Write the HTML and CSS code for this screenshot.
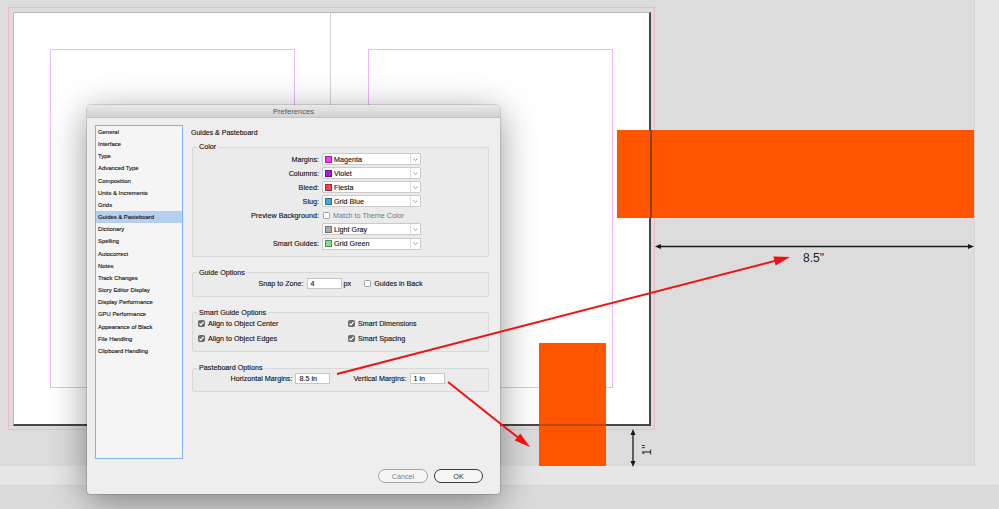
FILE: index.html
```html
<!DOCTYPE html>
<html lang="en">
<head>
  <meta charset="UTF-8">
  <title>Preferences - Guides &amp; Pasteboard</title>
  <link rel="stylesheet" href="styles.css">
</head>
<body>
  <div class="workspace">
    <div class="top">
      <div class="canvas">
        <div class="bleed">
          <div class="page">
            <div class="half half-left"><div class="margins"></div></div>
            <div class="half half-right"><div class="margins"></div></div>
          </div>
        </div>
        <div class="block block-wide"></div>
        <div class="block block-tall"></div>
        <span class="dim dim-h">8.5"</span>
        <span class="dim dim-v">1"</span>
      </div>
      <div class="vscroll"></div>
    </div>
    <div class="hscroll"></div>
    <div class="status"></div>
  </div>

  <div class="dialog">
    <div class="dialog-title">Preferences</div>
    <div class="dialog-main">
      <ul class="pref-list">
        <li>General</li>
        <li>Interface</li>
        <li>Type</li>
        <li>Advanced Type</li>
        <li>Composition</li>
        <li>Units &amp; Increments</li>
        <li>Grids</li>
        <li class="selected">Guides &amp; Pasteboard</li>
        <li>Dictionary</li>
        <li>Spelling</li>
        <li>Autocorrect</li>
        <li>Notes</li>
        <li>Track Changes</li>
        <li>Story Editor Display</li>
        <li>Display Performance</li>
        <li>GPU Performance</li>
        <li>Appearance of Black</li>
        <li>File Handling</li>
        <li>Clipboard Handling</li>
      </ul>

      <div class="panel">
        <h2 class="panel-title">Guides &amp; Pasteboard</h2>

        <fieldset class="group group-color">
          <legend>Color</legend>
          <div class="color-grid">
            <label>Margins:</label>
            <div class="select"><span class="swatch" style="background:#ff33ff"></span><span class="select-text">Magenta</span><span class="chev"><svg width="5" height="3" viewBox="0 0 5 3"><polyline points="0.5,0.5 2.5,2.5 4.5,0.5" /></svg></span></div>
            <label>Columns:</label>
            <div class="select"><span class="swatch" style="background:#a21cf2"></span><span class="select-text">Violet</span><span class="chev"><svg width="5" height="3" viewBox="0 0 5 3"><polyline points="0.5,0.5 2.5,2.5 4.5,0.5" /></svg></span></div>
            <label>Bleed:</label>
            <div class="select"><span class="swatch" style="background:#f2425a"></span><span class="select-text">Fiesta</span><span class="chev"><svg width="5" height="3" viewBox="0 0 5 3"><polyline points="0.5,0.5 2.5,2.5 4.5,0.5" /></svg></span></div>
            <label>Slug:</label>
            <div class="select"><span class="swatch" style="background:#4aa8d8"></span><span class="select-text">Grid Blue</span><span class="chev"><svg width="5" height="3" viewBox="0 0 5 3"><polyline points="0.5,0.5 2.5,2.5 4.5,0.5" /></svg></span></div>
            <label>Preview Background:</label>
            <div class="check-row"><span class="checkbox"></span><span class="muted">Match to Theme Color</span></div>
            <span></span>
            <div class="select"><span class="swatch" style="background:#a9a9a9"></span><span class="select-text">Light Gray</span><span class="chev"><svg width="5" height="3" viewBox="0 0 5 3"><polyline points="0.5,0.5 2.5,2.5 4.5,0.5" /></svg></span></div>
            <label>Smart Guides:</label>
            <div class="select"><span class="swatch" style="background:#7ee08a"></span><span class="select-text">Grid Green</span><span class="chev"><svg width="5" height="3" viewBox="0 0 5 3"><polyline points="0.5,0.5 2.5,2.5 4.5,0.5" /></svg></span></div>
          </div>
        </fieldset>

        <fieldset class="group">
          <legend>Guide Options</legend>
          <div class="inline-row">
            <label>Snap to Zone:</label>
            <span class="field field-snap">4</span>
            <span class="unit">px</span>
            <span class="checkbox"></span>
            <span>Guides in Back</span>
          </div>
        </fieldset>

        <fieldset class="group">
          <legend>Smart Guide Options</legend>
          <div class="smart-grid">
            <div class="check-row"><span class="checkbox checked"><svg width="7" height="7" viewBox="0 0 7 7"><polyline points="1.5,3.6 2.9,5 5.6,1.8" /></svg></span><span>Align to Object Center</span></div>
            <div class="check-row"><span class="checkbox checked"><svg width="7" height="7" viewBox="0 0 7 7"><polyline points="1.5,3.6 2.9,5 5.6,1.8" /></svg></span><span>Smart Dimensions</span></div>
            <div class="check-row"><span class="checkbox checked"><svg width="7" height="7" viewBox="0 0 7 7"><polyline points="1.5,3.6 2.9,5 5.6,1.8" /></svg></span><span>Align to Object Edges</span></div>
            <div class="check-row"><span class="checkbox checked"><svg width="7" height="7" viewBox="0 0 7 7"><polyline points="1.5,3.6 2.9,5 5.6,1.8" /></svg></span><span>Smart Spacing</span></div>
          </div>
        </fieldset>

        <fieldset class="group">
          <legend>Pasteboard Options</legend>
          <div class="inline-row paste-row">
            <label>Horizontal Margins:</label>
            <span class="field field-margin">8.5 in</span>
            <label class="second">Vertical Margins:</label>
            <span class="field field-margin">1 in</span>
          </div>
        </fieldset>
      </div>
    </div>
    <div class="dialog-buttons">
      <button class="btn btn-cancel">Cancel</button>
      <button class="btn btn-ok">OK</button>
    </div>
  </div>

  <svg class="annotations" width="999" height="509" viewBox="0 0 999 509">
    <!-- page edges showing through the orange blocks -->
    <line x1="651" y1="130" x2="651" y2="218" stroke="rgba(50,40,30,0.55)" stroke-width="2" />
    <line x1="539" y1="425" x2="606" y2="425" stroke="rgba(50,40,30,0.45)" stroke-width="1.5" />

    <!-- dimension arrows -->
    <line x1="659" y1="246.5" x2="970" y2="246.5" stroke="#1a1a1a" stroke-width="1.3" />
    <polygon points="655,246.5 661,244 661,249" fill="#1a1a1a" />
    <polygon points="974,246.5 968,244 968,249" fill="#1a1a1a" />
    <line x1="633" y1="433" x2="633" y2="463" stroke="#1a1a1a" stroke-width="1.3" />
    <polygon points="633,429 630.5,435 635.5,435" fill="#1a1a1a" />
    <polygon points="633,467 630.5,461 635.5,461" fill="#1a1a1a" />

    <!-- red callouts -->
    <line x1="337" y1="374" x2="776" y2="260.6" stroke="#f21010" stroke-width="2" />
    <polygon points="790,257 775.6,265.4 773.4,256.6" fill="#f21010" />
    <line x1="448" y1="382" x2="519" y2="438.3" stroke="#f21010" stroke-width="2" />
    <polygon points="530,447 514.7,440.6 520.3,433.6" fill="#f21010" />
  </svg>
</body>
</html>
```

FILE: styles.css
```css
/* Workspace */
html, body {
  margin: 0;
  padding: 0;
}

body {
  width: 999px;
  height: 509px;
  overflow: hidden;
  position: relative;
  background-color: #e6e6e6;
  font-family: "Liberation Sans", Arial, sans-serif;
}

.workspace {
  display: flex;
  flex-direction: column;
  height: 509px;
}

.top {
  display: flex;
  height: 466px;
}

.canvas {
  position: relative;
  width: 974px;
  background-color: #dcdcdc;
  border-right: 1px solid #d4d4d4;
}

.vscroll {
  flex: 1;
  background-color: #e6e6e6;
}

.hscroll {
  height: 19px;
  background-color: #e6e6e6;
  border-bottom: 1px solid #d3d3d3;
}

.status {
  flex: 1;
  background-color: #dbdbdb;
}

/* Document spread */
.bleed {
  position: absolute;
  left: 8px;
  top: 7px;
  padding: 4px 3px 3px 4px;
  border: 1px solid #efb9c2;
}

.page {
  display: flex;
  background: #fff;
  border-top: 1px solid #b9b9b9;
  border-left: 1px solid #b9b9b9;
  border-right: 2px solid #474747;
  border-bottom: 2px solid #474747;
}

.half {
  width: 318px;
  height: 411px;
  box-sizing: border-box;
  padding-top: 36px;
}

.half-left {
  width: 317px;
  padding-left: 36px;
  border-right: 1px solid #d2d2d2;
}

.half-right {
  padding-left: 37px;
}

.margins {
  width: 245px;
  height: 339px;
  box-sizing: border-box;
  border: 1px solid #ecb8f6;
}

.block {
  position: absolute;
  background-color: #ff5500;
}

.block-wide {
  left: 617px;
  top: 130px;
  width: 357px;
  height: 88px;
}

.block-tall {
  left: 539px;
  top: 343px;
  width: 67px;
  height: 123px;
}

.dim {
  position: absolute;
  font-size: 12px;
  color: #1c1c1c;
  line-height: 14px;
}

.dim-h {
  left: 803px;
  top: 251px;
}

.dim-v {
  left: 642px;
  top: 443px;
  transform: rotate(-90deg);
}

.annotations {
  position: absolute;
  left: 0;
  top: 0;
  pointer-events: none;
}

/* Dialog */
.dialog {
  position: absolute;
  left: 87px;
  top: 105px;
  width: 413px;
  height: 389px;
  box-sizing: border-box;
  background: #eeeeee;
  border-radius: 4px;
  box-shadow: 0 0 0 1px rgba(0, 0, 0, 0.12), 0 8px 36px rgba(0, 0, 0, 0.42);
  display: flex;
  flex-direction: column;
  font-size: 7.2px;
  color: #111;
  -webkit-text-stroke: 0.12px #111;
}

.dialog-title {
  height: 13px;
  line-height: 13px;
  text-align: center;
  color: #555;
  -webkit-text-stroke: 0;
  font-size: 7.6px;
  background: linear-gradient(#e8e8e8, #d2d2d2);
  border-bottom: 1px solid #c4c4c4;
  border-radius: 4px 4px 0 0;
  box-sizing: border-box;
}

.dialog-main {
  display: flex;
  gap: 8px;
  padding: 7px 11px 0 8px;
}

.pref-list {
  list-style: none;
  margin: 0;
  padding: 0;
  width: 88px;
  height: 334px;
  box-sizing: border-box;
  background: #f5f5f5;
  border: 1px solid #7fb2ee;
  font-size: 5.9px;
  color: #111;
}

.pref-list li {
  height: 12.17px;
  line-height: 12.17px;
  padding-left: 2px;
  white-space: nowrap;
}

.pref-list li.selected {
  background: #b5cfee;
}

.panel {
  flex: 1;
  display: flex;
  flex-direction: column;
}

.panel-title {
  margin: 3px 0 0;
  font-size: 7px;
  font-weight: normal;
  line-height: 10px;
}

/* Group boxes */
.group {
  margin: 11px 0 0 1px;
  padding: 0 0 7px;
  border: 1px solid #d9d9d9;
  border-radius: 2px;
  background: rgba(0, 0, 0, 0.012);
  min-width: 0;
}

.group-color {
  margin-top: 4px;
  padding-bottom: 6px;
}

.group legend {
  margin-left: 4px;
  padding: 0 2px;
  line-height: 10px;
  font-size: 7.2px;
}

.color-grid {
  display: grid;
  grid-template-columns: 126px 99px;
  column-gap: 3px;
  row-gap: 2.1px;
  align-items: center;
  padding-top: 1px;
}

.color-grid label {
  text-align: right;
  white-space: nowrap;
}

.select {
  display: flex;
  align-items: center;
  height: 12px;
  box-sizing: border-box;
  background: #fff;
  border: 1px solid #cacaca;
  border-radius: 1px;
}

.swatch {
  width: 7px;
  height: 7px;
  margin-left: 2px;
  box-sizing: border-box;
  border: 0.5px solid rgba(0, 0, 0, 0.35);
}

.select-text {
  flex: 1;
  margin-left: 2px;
}

.chev {
  width: 9px;
  height: 100%;
  display: flex;
  align-items: center;
  justify-content: center;
  border-left: 1px solid #e0e0e0;
}

.chev polyline {
  fill: none;
  stroke: #8a8a8a;
  stroke-width: 0.9;
}

.check-row {
  display: flex;
  align-items: center;
  gap: 3px;
  height: 12px;
  white-space: nowrap;
}

.checkbox {
  width: 7px;
  height: 7px;
  box-sizing: border-box;
  border: 1px solid #9d9d9d;
  border-radius: 1.5px;
  background: #fff;
  display: inline-flex;
}

.checkbox.checked {
  border-color: #6a6a6a;
  background: #6a6a6a;
}

.checkbox svg {
  margin: -1px;
}

.checkbox polyline {
  fill: none;
  stroke: #fff;
  stroke-width: 1.2;
}

.muted {
  color: #777;
  -webkit-text-stroke: 0;
}

.color-grid .check-row {
  padding-left: 1px;
}

.inline-row {
  display: flex;
  align-items: center;
  justify-content: center;
  height: 11px;
  white-space: nowrap;
}

.field {
  height: 11px;
  line-height: 10px;
  box-sizing: border-box;
  padding-left: 3px;
  background: #fff;
  border: 1px solid #c6c6c6;
}

.field-snap {
  width: 35px;
  margin-left: 3px;
}

.unit {
  margin: 0 13px 0 2px;
}

.inline-row .checkbox {
  margin-right: 3px;
}

.paste-row {
  padding-right: 6px;
}

.field-margin {
  width: 35px;
  margin-left: 3px;
}

.paste-row .second {
  margin-left: 23px;
}

.smart-grid {
  display: grid;
  grid-template-columns: 150px 1fr;
  row-gap: 3px;
  padding-left: 5px;
  margin-top: -0.5px;
}

/* Buttons */
.dialog-buttons {
  display: flex;
  justify-content: flex-end;
  gap: 6px;
  padding: 10px 17px 0 0;
}

.btn {
  width: 50px;
  height: 14px;
  padding: 0;
  border-radius: 7px;
  font-family: inherit;
  font-size: 7.2px;
  background: #f6f6f6;
  -webkit-text-stroke: 0;
}

.btn-cancel {
  border: 1px solid #a3a3a3;
  color: #7c7c7c;
}

.btn-ok {
  width: 49px;
  border: 1.3px solid #3a3a3a;
  color: #333;
}
```
